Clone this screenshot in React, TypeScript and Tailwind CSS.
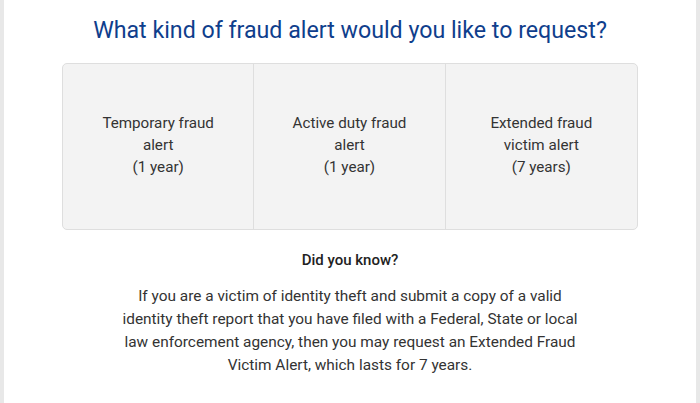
import React from "react";

const options = [
  ["Temporary fraud alert", "(1 year)"],
  ["Active duty fraud alert", "(1 year)"],
  ["Extended fraud victim alert", "(7 years)"],
];

const App = () => {
  return (
    <div className="h-[403px] bg-[#e8e8e8] px-[4px] font-['Roboto',sans-serif]">
      <div className="h-full bg-white pt-4 overflow-hidden">
        <h1 className="text-center text-[23.2px] leading-[28px] text-[#0f3e8c]">
          What kind of fraud alert would you like to request?
        </h1>

        <div className="mx-[58px] mt-[19px] grid h-[167px] grid-cols-3 rounded-[5px] border border-[#dedede] bg-[#f3f3f3]">
          {options.map(([label, term], i) => (
            <div
              key={label}
              className={`flex flex-col items-center justify-center px-9 pb-1 text-center text-[15.2px] leading-[22px] text-[#333] ${
                i < 2 ? "border-r border-[#dedede]" : ""
              }`}
            >
              <span>{label}</span>
              <span>{term}</span>
            </div>
          ))}
        </div>

        <p className="mt-[20px] text-center text-[15px] leading-[20px] font-medium text-[#222]">
          Did you know?
        </p>
        <p className="mx-auto mt-[15px] max-w-[464px] text-center text-[15.4px] leading-[23px] text-[#333]">
          If you are a victim of identity theft and submit a copy of a valid
          identity theft report that you have filed with a Federal, State or
          local law enforcement agency, then you may request an Extended Fraud
          Victim Alert, which lasts for 7 years.
        </p>
      </div>
    </div>
  );
};

export default App;
